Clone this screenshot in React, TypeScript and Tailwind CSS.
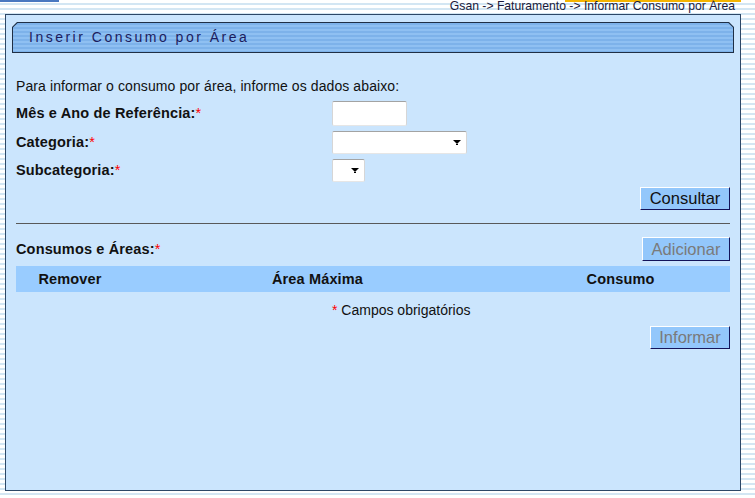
import React from "react";

function Req() {
  return <span className="text-[#ff0000] font-normal">*</span>;
}

function Arrow() {
  return (
    <svg width="8" height="6" viewBox="0 0 8 6" className="block">
      <polygon points="0,0 8,0 4,4" fill="#000" />
      <rect x="3" y="4" width="2" height="1" fill="#000" />
    </svg>
  );
}

const field =
  "bg-white border border-t-[#a3a3a3] border-l-[#d6d6d6] border-r-[#d6d6d6] border-b-[#e6e6e6] rounded-[2px]";

const btn =
  "flex items-center justify-center bg-[#93c7fb] border border-t-white border-l-white border-r-[#14145a] border-b-[#14145a] text-[16.5px] leading-none";

export default function App() {
  return (
    <div className="w-[755px] h-[498px] overflow-hidden font-['Liberation_Sans',Arial,sans-serif] bg-[repeating-linear-gradient(to_bottom,#ffffff_0px,#ffffff_3px,#d3e6f3_3px,#d3e6f3_5px)]">
      {/* top strip */}
      <div className="h-[14px]">
        <div className="flex h-[2px]">
          <div className="w-[59px] bg-[#4a78c0]" />
          <div className="ml-auto mr-[14px] w-[176px] bg-[#f4b400]" />
        </div>
        <div className="flex justify-end pr-[20px] -mt-[2px] text-[12.2px] leading-[12px] text-[#1b1b3b]">
          Gsan -&gt; Faturamento -&gt; Informar Consumo por Área
        </div>
      </div>

      {/* panel */}
      <div className="ml-[5px] w-[736px] h-[477px] border border-[#2d4766] bg-[#cbe5fd]">
        {/* title bar */}
        <div className="mt-[7px] ml-[6px] mr-[6px] h-[31px] bg-[#1f2f45] [clip-path:polygon(5px_0,calc(100%_-_5px)_0,100%_5px,100%_100%,0_100%,0_5px)] p-[1px]">
          <div className="h-full flex items-center pl-[16px] bg-[repeating-linear-gradient(to_bottom,#7db2ea_0px,#7db2ea_2px,#8fc0f2_2px,#8fc0f2_4px)] [clip-path:polygon(4.6px_0,calc(100%_-_4.6px)_0,100%_4.6px,100%_100%,0_100%,0_4.6px)]">
            <span className="text-[14px] tracking-[2.5px] text-[#1c1c5e]">Inserir Consumo por Área</span>
          </div>
        </div>

        <div className="pl-[10px] pr-[10px] text-[#111]">
          <div className="mt-[25px] text-[14px] leading-[16px] tracking-[0.1px]">
            Para informar o consumo por área, informe os dados abaixo:
          </div>

          <div className="flex items-center h-[25px] mt-[7px]">
            <div className="w-[316px] font-bold text-[14.5px] leading-[17px] tracking-[0.15px]">
              Mês e Ano de Referência:<Req />
            </div>
            <div className={`w-[75px] h-[25px] ${field}`} />
          </div>

          <div className="flex items-center h-[23px] mt-[5px]">
            <div className="w-[316px] font-bold text-[14.5px] leading-[17px] tracking-[0.15px]">
              Categoria:<Req />
            </div>
            <div className={`w-[135px] h-[23px] flex items-center justify-end pr-[5px] ${field}`}>
              <Arrow />
            </div>
          </div>

          <div className="flex items-center h-[23px] mt-[5px]">
            <div className="w-[316px] font-bold text-[14.5px] leading-[17px] tracking-[0.15px]">
              Subcategoria:<Req />
            </div>
            <div className={`w-[33px] h-[23px] flex items-center justify-end pr-[5px] ${field}`}>
              <Arrow />
            </div>
          </div>

          <div className="flex justify-end mt-[5px]">
            <button className={`w-[90px] h-[23px] text-[#111] ${btn}`}>Consultar</button>
          </div>

          <div className="mt-[13px] border-t border-[#595959]" />

          <div className="flex items-center h-[24px] mt-[13px]">
            <div className="font-bold text-[14.5px] leading-[17px] tracking-[0.15px]">
              Consumos e Áreas:<Req />
            </div>
            <button className={`ml-auto w-[88px] h-[24px] text-[#7a7a7a] ${btn}`}>Adicionar</button>
          </div>

          <div className="mt-[5px] h-[26px] grid grid-cols-[108px_387px_1fr] items-center bg-[#99ccff] font-bold text-[14.5px] leading-[17px] tracking-[0.15px] text-center text-[#111]">
            <div>Remover</div>
            <div>Área Máxima</div>
            <div>Consumo</div>
          </div>

          <div className="mt-[10px] pl-[316px] text-[14px] leading-[16px]">
            <Req /> Campos obrigatórios
          </div>

          <div className="flex justify-end mt-[8px]">
            <button className={`w-[80px] h-[23px] text-[#7a7a7a] ${btn}`}>Informar</button>
          </div>
        </div>
      </div>
    </div>
  );
}
